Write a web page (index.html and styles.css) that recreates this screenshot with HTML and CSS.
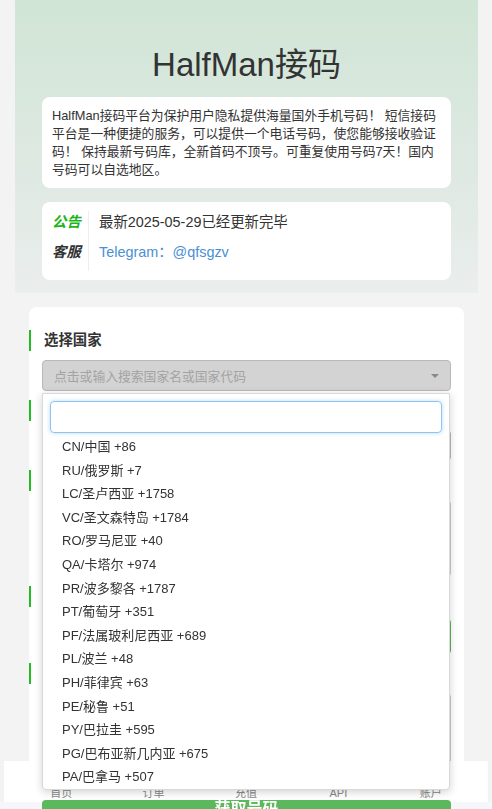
FILE: index.html
```html
<!DOCTYPE html>
<html lang="zh-CN">
<head>
<meta charset="utf-8">
<title>HalfMan接码</title>
<link rel="stylesheet" href="styles.css">
</head>
<body>
<div class="page">
  <header class="hero">
    <h1 class="title">HalfMan接码</h1>
    <div class="card intro">HalfMan接码平台为保护用户隐私提供海量国外手机号码！ 短信接码平台是一种便捷的服务，可以提供一个电话号码，使您能够接收验证码！ 保持最新号码库，全新首码不顶号。可重复使用号码7天！国内号码可以自选地区。</div>
    <div class="card notice">
      <div class="row"><span class="tag tag-green">公告</span><span class="val">最新2025-05-29已经更新完毕</span></div>
      <div class="row"><span class="tag">客服</span><span class="val link">Telegram：@qfsgzv</span></div>
    </div>
  </header>

  <main class="panel">
    <div class="field">
      <div class="label">选择国家</div>
      <div class="select-wrap">
        <div class="select"><span class="ph">点击或输入搜索国家名或国家代码</span><span class="arrow"></span></div>
        <div class="dropdown">
          <div class="search"><div class="search-input"></div></div>
          <ul class="options">
            <li>CN/中国 +86</li>
            <li>RU/俄罗斯 +7</li>
            <li>LC/圣卢西亚 +1758</li>
            <li>VC/圣文森特岛 +1784</li>
            <li>RO/罗马尼亚 +40</li>
            <li>QA/卡塔尔 +974</li>
            <li>PR/波多黎各 +1787</li>
            <li>PT/葡萄牙 +351</li>
            <li>PF/法属玻利尼西亚 +689</li>
            <li>PL/波兰 +48</li>
            <li>PH/菲律宾 +63</li>
            <li>PE/秘鲁 +51</li>
            <li>PY/巴拉圭 +595</li>
            <li>PG/巴布亚新几内亚 +675</li>
            <li>PA/巴拿马 +507</li>
          </ul>
        </div>
      </div>
    </div>
    <div class="field">
      <div class="label">选择项目</div>
      <div class="select"><span class="ph">点击或输入搜索项目</span><span class="arrow"></span></div>
    </div>
    <div class="field">
      <div class="label">号码</div>
      <div class="box"></div>
    </div>
    <div class="field">
      <div class="label">操作</div>
      <div class="btn">获取号码</div>
    </div>
    <div class="field">
      <div class="label">短信</div>
      <div class="box"></div>
    </div>
  </main>
</div>

<nav class="tabbar">
  <div class="tabs">
    <span class="tab">首页</span>
    <span class="tab">订单</span>
    <span class="tab">充值</span>
    <span class="tab">API</span>
    <span class="tab">账户</span>
  </div>
  <div class="strip"></div>
</nav>
<div class="action">获取号码</div>
</body>
</html>
```

FILE: styles.css
```css
* { box-sizing: border-box; }
html, body { margin: 0; padding: 0; }
body {
  background: #f3f3f3;
  font-family: "Liberation Sans", Arial, "Noto Sans CJK SC", sans-serif;
  color: #333;
  font-size: 12.8px;
}
.page { padding: 0 14px 120px 15px; }

.hero {
  background: linear-gradient(180deg, #d0e5d5 0%, #dfe9e3 60%, #eaeeed 100%);
  padding: 45px 27px 13px 27px;
}
.title {
  margin: 0 0 12px;
  text-align: center;
  font-size: 33px;
  line-height: 40px;
  font-weight: normal;
  color: #333;
}
.card {
  background: #fff;
  border-radius: 8px;
}
.intro {
  padding: 10px 10px 9px;
  line-height: 18px;
  font-size: 12.8px;
  color: #333;
}
.notice {
  margin-top: 14px;
  padding: 9px 10px 9px;
}
.row { display: flex; }
.tag {
  width: 37px;
  flex: none;
  font-weight: bold;
  font-style: italic;
  font-size: 14.4px;
  line-height: 22px;
  padding-bottom: 8px;
  border-right: 1px solid #eee;
  color: #333;
}
.tag-green { color: #1cb51c; }
.val {
  padding-left: 10px;
  font-size: 14.4px;
  line-height: 22px;
}
.link { color: #4a8fd3; }

.panel {
  margin: 14px 14px 0;
  background: #fff;
  border-radius: 8px;
  padding: 23px 13px 30px;
}
.field + .field { margin-top: 9px; }
.label {
  margin-left: -13px;
  border-left: 2px solid #22bb22;
  padding-left: 13px;
  font-size: 14.4px;
  font-weight: bold;
  line-height: 21px;
  margin-bottom: 9px;
}
.select-wrap { position: relative; }
.select {
  height: 31px;
  background: #d3d3d3;
  border: 1px solid #b9b9b9;
  border-radius: 4px;
  display: flex;
  align-items: center;
  justify-content: space-between;
  padding: 0 11px 0 11px;
}
.ph { color: #a3a3a3; font-size: 12.8px; }
.arrow {
  width: 0; height: 0;
  border-left: 4px solid transparent;
  border-right: 4px solid transparent;
  border-top: 4px solid #888;
}
.box {
  height: 77px;
  border: 1px solid #ccc;
  border-radius: 4px;
}
.btn {
  height: 35px;
  margin-top: 12px;
  background: #5cb85c;
  border-radius: 4px;
  color: #fff;
  text-align: center;
  line-height: 35px;
  font-weight: bold;
  font-size: 15px;
}

.dropdown {
  position: absolute;
  top: 33px;
  left: 0;
  right: 1px;
  z-index: 20;
  background: #fff;
  border: 1px solid #d9d9d9;
  border-radius: 0 0 4px 4px;
  box-shadow: 0 2px 8px rgba(0, 0, 0, 0.18);
}
.search { padding: 7px 7px 2px; }
.search-input {
  height: 32px;
  border: 1px solid #8ec4f2;
  border-radius: 4px;
  box-shadow: 0 0 4px rgba(102, 175, 233, 0.45);
}
.options {
  list-style: none;
  margin: 0;
  padding: 0;
}
.options li {
  padding: 0 19px;
  line-height: 23.6px;
  font-size: 13px;
  color: #333;
  white-space: nowrap;
}

.tabbar {
  position: fixed;
  left: 0;
  right: 0;
  bottom: 0;
  z-index: 10;
}
.tabs {
  margin: 0 4px;
  height: 41px;
  background: #fff;
  display: grid;
  grid-template-columns: repeat(5, 1fr);
  padding: 0 11px;
  align-items: end;
}
.tab {
  text-align: center;
  font-size: 11px;
  line-height: 14px;
  padding-bottom: 2px;
  color: #888;
}
.strip { height: 7px; background: #f5f7fa; }
.action {
  position: fixed;
  left: 42px;
  width: 409px;
  top: 800px;
  height: 40px;
  z-index: 11;
  background: #5cb85c;
  color: #fff;
  text-align: center;
  font-size: 16px;
  font-weight: bold;
  line-height: 18px;
  border-radius: 4px 4px 0 0;
}
```
